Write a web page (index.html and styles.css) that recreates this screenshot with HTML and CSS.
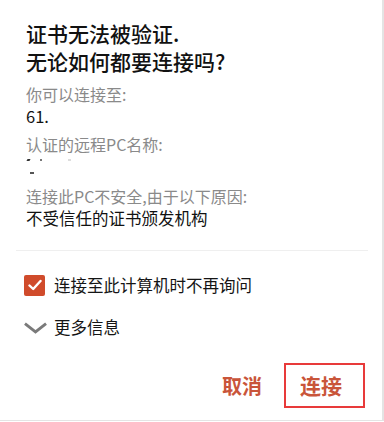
FILE: index.html
```html
<!DOCTYPE html>
<html lang="zh-CN">
<head>
<meta charset="utf-8">
<title>证书无法被验证</title>
<link rel="stylesheet" href="styles.css">
</head>
<body>
<div class="dialog">
  <div class="content">
    <h1 class="title"><span class="tline">证书无法被验证.</span><span class="tline">无论如何都要连接吗?</span></h1>
    <div class="info">
      <div class="group">
        <div class="label">你可以连接至:</div>
        <div class="value">61.</div>
      </div>
      <div class="group">
        <div class="label">认证的远程PC名称:</div>
        <div class="value tall">
          <div class="smudges"><span class="sm s1"></span><span class="sm s2"></span><span class="sm s3"></span></div>
          <div class="smudges"><span class="sm s4"></span></div>
        </div>
      </div>
      <div class="group">
        <div class="label">连接此PC不安全,由于以下原因:</div>
        <div class="value">不受信任的证书颁发机构</div>
      </div>
    </div>
  </div>
  <div class="divider"></div>
  <div class="options">
    <label class="row">
      <span class="check">
        <svg width="14" height="12" viewBox="0 0 14 12"><path d="M1.5 6.5 L5.2 10 L12.5 2" fill="none" stroke="#fff" stroke-width="2.4" stroke-linecap="round" stroke-linejoin="round"/></svg>
      </span>
      <span class="row-text">连接至此计算机时不再询问</span>
    </label>
    <div class="row more">
      <span class="chev">
        <svg width="24" height="12" viewBox="0 0 24 12"><path d="M1 1.5 L12 10 L23 1.5" fill="none" stroke="#7a7a7a" stroke-width="3"/></svg>
      </span>
      <span class="row-text">更多信息</span>
    </div>
  </div>
  <div class="actions">
    <button class="btn">取消</button>
    <button class="btn primary">连接</button>
  </div>
</div>
</body>
</html>
```

FILE: styles.css
```css
html, body {
  margin: 0;
  padding: 0;
  background: #ffffff;
}

body {
  font-family: "Noto Sans CJK SC", "Noto Sans", "Liberation Sans", sans-serif;
  color: #111111;
}

.dialog {
  box-sizing: border-box;
  width: 384px;
  height: 421px;
  border-right: 2px solid #e4e4e4;
  border-bottom: 1px solid #e4e4e4;
  display: flex;
  flex-direction: column;
}

.content {
  padding: 19px 0 0 26px;
}

.title {
  margin: 0;
  font-size: 21px;
  font-weight: 500;
  color: #111111;
  display: flex;
  flex-direction: column;
}

.tline {
  display: block;
  height: 28px;
  line-height: 28px;
}

.info {
  display: flex;
  flex-direction: column;
  gap: 6px;
  margin-top: 8px;
}

.label {
  font-size: 16px;
  line-height: 22px;
  height: 22px;
  color: #8a8a8a;
}

.value {
  font-size: 16.5px;
  line-height: 22px;
  height: 22px;
  color: #111111;
}

.value.tall {
  height: 24px;
  display: flex;
  flex-direction: column;
  gap: 10px;
  padding-top: 3px;
  box-sizing: border-box;
}

.smudges {
  display: flex;
  align-items: center;
  height: 3px;
}

.sm {
  display: block;
  height: 2px;
  background: #333;
}

.s1 {
  width: 3px;
  margin-left: 1px;
  transform: skewX(-30deg);
}

.s2 {
  width: 2px;
  margin-left: 10px;
  background: #777;
}

.s3 {
  width: 3px;
  margin-left: 26px;
  background: #ddd;
}

.s4 {
  width: 4px;
  margin-left: 4px;
  background: #555;
}

.divider {
  height: 1px;
  background: #efefef;
  margin: 21px 14px 0 16px;
}

.options {
  display: flex;
  flex-direction: column;
  padding-left: 24px;
  margin-top: 24px;
  gap: 22px;
}

.row {
  display: flex;
  align-items: center;
  height: 20px;
}

.check {
  width: 21px;
  height: 21px;
  border-radius: 2px;
  background: #d04b2b;
  display: flex;
  align-items: center;
  justify-content: center;
  flex: none;
}

.row-text {
  font-size: 16.5px;
  margin-left: 9px;
  color: #151515;
}

.chev {
  width: 23px;
  display: flex;
  align-items: center;
  flex: none;
  padding-top: 1px;
}

.more .row-text {
  margin-left: 7px;
}

.actions {
  display: flex;
  justify-content: flex-end;
  align-items: center;
  gap: 20px;
  padding-right: 17px;
  margin-top: 26px;
}

.btn {
  background: none;
  border: 2px solid transparent;
  font-family: "Noto Sans CJK SC", "Noto Sans", sans-serif;
  font-size: 20px;
  font-weight: 700;
  color: #c9553a;
  height: 45px;
  padding: 0;
  line-height: 41px;
  cursor: pointer;
}

.btn.primary {
  border-color: #e83a3a;
  padding: 0 21px 0 14px;
  font-size: 21px;
}
```
